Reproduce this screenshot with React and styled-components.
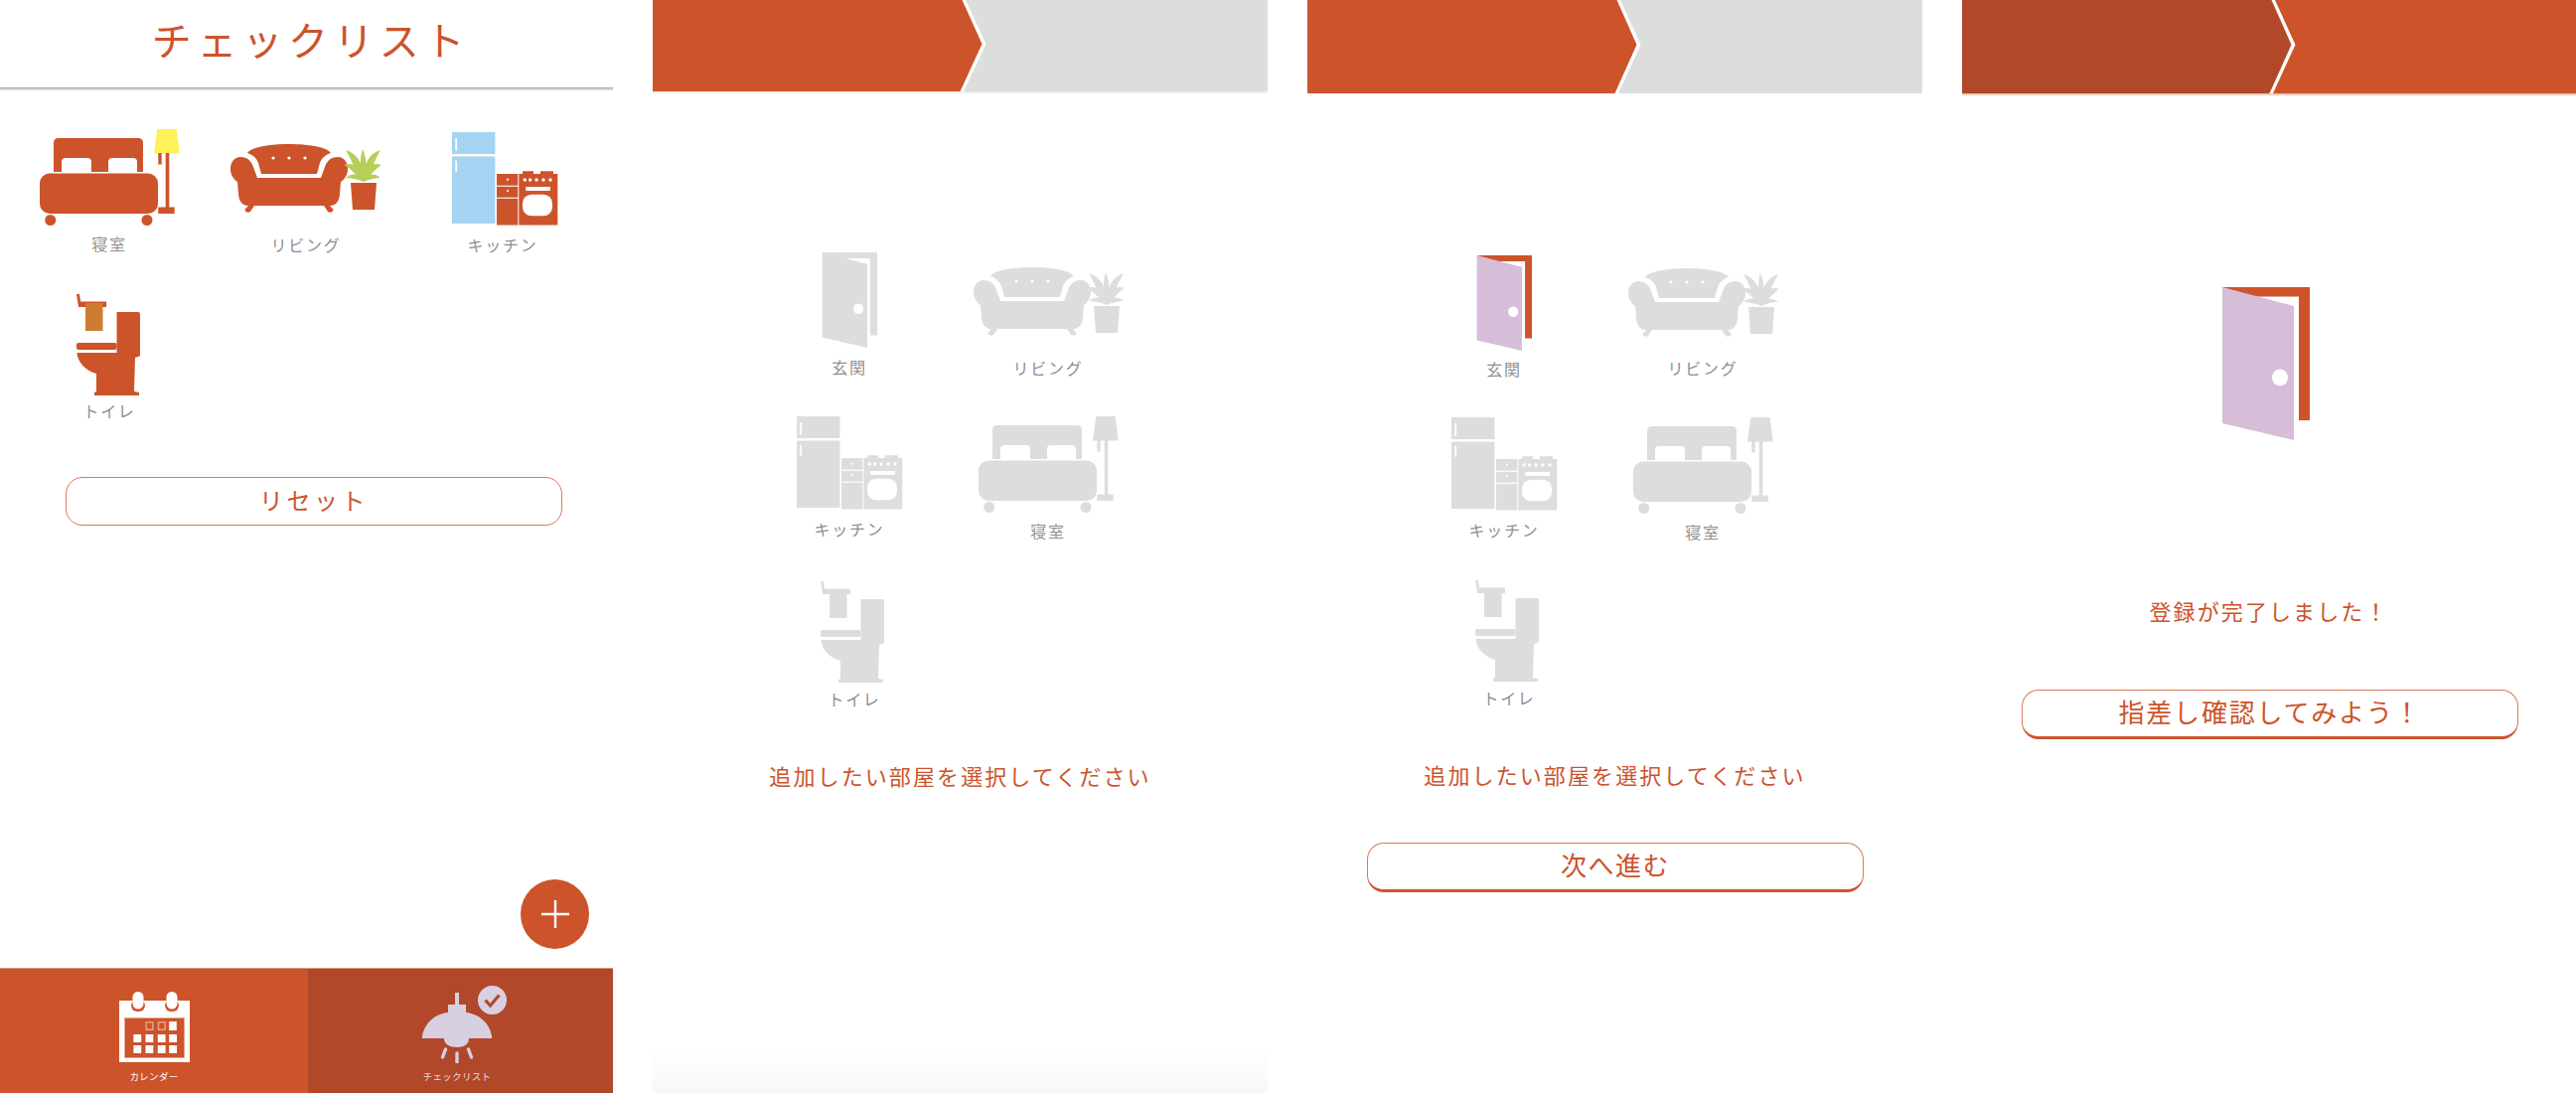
import React from 'react';
import styled, { createGlobalStyle } from 'styled-components';

const ORANGE = '#cd532b';
const DARK = '#b2482a';
const GREY = '#dcdedd';

const COLOURS = { main: ORANGE, lamp: '#fff157', leaf: '#b5cf58', fridge: '#a5d4f3', towel: '#cf7c30' };
const MUTED = { main: GREY, lamp: GREY, leaf: GREY, fridge: GREY, towel: GREY };

const GlobalStyle = createGlobalStyle`
  html, body {
    margin: 0;
    padding: 0;
    background: #fff;
  }
  body {
    font-family: "Noto Sans CJK JP", "Noto Sans", sans-serif;
    font-weight: 400;
  }
`;

const Page = styled.div`
  display: flex;
  gap: 40px;
  width: 2593px;
  height: 1100px;
  overflow: hidden;
`;

const Panel = styled.section`
  position: relative;
  display: flex;
  flex-direction: column;
  flex: none;
  width: ${props => props.$width}px;
  height: 1100px;
  background: ${props =>
    props.$fade ? 'linear-gradient(to bottom, #fff 0, #fff 1055px, #f7f7f7 1100px)' : '#fff'};
`;

const Header = styled.header`
  flex: none;
  height: 88px;
  display: flex;
  align-items: flex-start;
  justify-content: center;
  border-bottom: 1px solid #a9a9a9;
  box-shadow: 0 2px 0 #dadada;
`;

const Title = styled.h1`
  margin: 14px 0 0 9px;
  font-size: 40px;
  line-height: 50px;
  font-weight: 400;
  letter-spacing: 5.8px;
  color: ${ORANGE};
`;

const StepBar = styled.div`
  flex: none;
  height: ${props => props.$height}px;
  background: ${props => props.$rest};
  border-bottom: ${props => (props.$line ? `2px solid ${props.$line}` : 'none')};
`;

const StepEdge = styled.div`
  width: 340px;
  height: 100%;
  background: #fff;
  clip-path: polygon(0 0, 315px 0, 335.5px 48%, 313px 100%, 0 100%);
`;

const StepFill = styled.div`
  width: 100%;
  height: 100%;
  background: ${props => props.$fill};
  clip-path: polygon(0 0, 311.5px 0, 331.5px 48%, 309.5px 100%, 0 100%);
`;

const RoomGrid = styled.div`
  display: grid;
  grid-template-columns: repeat(${props => props.$cols}, ${props => props.$colWidth}px);
  grid-auto-rows: ${props => props.$rowHeight}px;
  padding-left: ${props => props.$left}px;
  margin-top: ${props => props.$top}px;
`;

const Room = styled.div`
  display: flex;
  flex-direction: column;
  align-items: center;
`;

const IconSlot = styled.div`
  margin-top: ${props => props.$top || 0}px;
  margin-bottom: ${props => props.$gap}px;
  margin-left: ${props => props.$nudge || 0}px;
  & svg {
    display: block;
  }
`;

const RoomLabel = styled.span`
  margin-left: ${props => props.$nudge || 0}px;
  font-size: 16px;
  line-height: 20px;
  letter-spacing: 1.7px;
  color: #8f8f8f;
  white-space: nowrap;
`;

const Message = styled.p`
  margin: ${props => props.$top}px 0 0;
  text-align: center;
  font-size: 22px;
  line-height: 30px;
  letter-spacing: 2.1px;
  color: ${ORANGE};
`;

const OutlineButton = styled.button`
  display: block;
  box-sizing: border-box;
  width: 500px;
  height: ${props => (props.$heavy ? 50 : 49)}px;
  margin: ${props => props.$top}px 0 0 ${props => props.$left}px;
  padding: 0 0 4px;
  background: #fff;
  border: 1.5px solid #dc7a55;
  border-bottom: ${props => (props.$heavy ? 3 : 1.5)}px solid ${props => (props.$heavy ? ORANGE : '#dc7a55')};
  border-radius: 17px;
  font-family: inherit;
  font-weight: 400;
  font-size: ${props => props.$size}px;
  line-height: 1;
  letter-spacing: ${props => props.$spacing}px;
  color: ${ORANGE};
`;

const Spacer = styled.div`
  flex: 1;
`;

const AddButton = styled.button`
  position: absolute;
  right: 24px;
  bottom: 145px;
  width: 69px;
  height: 70px;
  padding: 0;
  border: 0;
  border-radius: 50%;
  background: ${ORANGE};
  display: flex;
  align-items: center;
  justify-content: center;
`;

const TabBar = styled.nav`
  flex: none;
  display: flex;
  height: 126px;
  box-sizing: border-box;
  border-top: 1px solid #dd9a82;
`;

const Tab = styled.div`
  flex: none;
  box-sizing: border-box;
  width: ${props => props.$width}px;
  padding-top: ${props => props.$top}px;
  padding-right: ${props => props.$shift || 0}px;
  background: ${props => props.$bg};
  display: flex;
  flex-direction: column;
  align-items: center;
  & svg {
    display: block;
  }
`;

const TabLabel = styled.span`
  margin-top: ${props => props.$gap}px;
  font-size: 9.5px;
  line-height: 12px;
  letter-spacing: 0.3px;
  color: ${props => props.$color};
  white-space: nowrap;
`;

const DoorIcon = ({ leaf, frame, width = 56, height = 96 }) => (
  <svg width={width} height={height} viewBox="0 0 89 154" preserveAspectRatio="none">
    <path d="M0 0H89V134H78V9.6H30Z" fill={frame} />
    <path d="M1 0L73 19V154L1 137Z" fill={leaf} />
    <ellipse cx="59" cy="91" rx="8" ry="8.5" fill="#fff" />
  </svg>
);

const BedIcon = ({ tone }) => (
  <svg width="141" height="97" viewBox="0 0 141 97">
    <path d="M19 9H99Q104 9 104 14V43H98V33Q98 29 94 29H73Q69 29 69 33V43H52V33Q52 29 48 29H26Q22 29 22 33V43H14V14Q14 9 19 9Z" fill={tone.main} />
    <rect x="0" y="44.5" width="119" height="40.5" rx="10" fill={tone.main} />
    <circle cx="10.7" cy="91.5" r="5.5" fill={tone.main} />
    <circle cx="108" cy="91.5" r="5.5" fill={tone.main} />
    <path d="M118.3 0H137.7L140.7 24.5H115Z" fill={tone.lamp} />
    <rect x="119.3" y="24" width="3.4" height="11.5" fill={tone.main} />
    <rect x="126.7" y="24" width="3.6" height="56" fill={tone.main} />
    <rect x="119.3" y="78.5" width="16.4" height="6.5" fill={tone.main} />
  </svg>
);

const SofaIcon = ({ tone }) => (
  <svg width="151" height="69" viewBox="0 0 151 69">
    <path d="M17 9C24 -3 94 -3 101 9C95 11 92 14 90 19L87 30H31L28 19C26 14 23 11 17 9Z" fill={tone.main} />
    <circle cx="43" cy="14" r="1.6" fill="#fff" />
    <circle cx="59" cy="14" r="1.6" fill="#fff" />
    <circle cx="75" cy="14" r="1.6" fill="#fff" />
    <path d="M10 13C17 13 21 17 23 23L27 34H91L95 23C97 17 101 13 108 13C115 13 118.5 20 118 26C117.5 32 114 36 111 38L110 50C109.5 58 106 62 100 62L103 65C105 68 100 70 98 68L94 62H24L20 68C18 70 13 68 15 65L18 62C12 62 8.5 58 8 50L7 38C4 36 .5 32 0 26C-.5 20 3 13 10 13Z" fill={tone.main} />
    <path d="M121 39H147L145 66H123Z" fill={tone.main} />
    <g fill={tone.leaf}>
      <path d="M134 38C127 30 122 16 116 6C127 9 135 20 134 38Z" />
      <path d="M134 38C126 30 120 24 114 21C124 17 132 24 134 38Z" />
      <path d="M134 38C127 35 121 34 116 34C123 28 131 30 134 38Z" />
      <path d="M134 38C130 26 130 14 133 5C137 14 138 26 134 38Z" />
      <path d="M134 38C141 30 145 16 151 6C140 9 133 20 134 38Z" />
      <path d="M134 38C142 30 147 24 152 21C143 17 135 24 134 38Z" />
      <path d="M134 38C141 35 146 34 151 34C144 28 137 30 134 38Z" />
    </g>
  </svg>
);

const KitchenIcon = ({ tone }) => (
  <svg width="108" height="94" viewBox="0 0 108 94">
    <rect x="1" y="0" width="43.4" height="22" fill={tone.fridge} />
    <rect x="1" y="24.5" width="43.4" height="67.5" fill={tone.fridge} />
    <rect x="4.3" y="6" width="1.8" height="12.5" fill="#fff" />
    <rect x="4.3" y="28.7" width="1.8" height="11" fill="#fff" />
    <rect x="46" y="42" width="21.3" height="11.7" fill={tone.main} />
    <rect x="46" y="54.8" width="21.3" height="10.9" fill={tone.main} />
    <rect x="46" y="66.8" width="21.3" height="26.7" fill={tone.main} />
    <circle cx="57" cy="47.7" r="1.1" fill="#fff" />
    <circle cx="57" cy="59" r="1.1" fill="#fff" />
    <path d="M72 39.3H83V42H90V39.3H103V42H107.3V93.5H68.3V42H72Z" fill={tone.main} />
    <g fill="#fff">
      <circle cx="74.3" cy="48" r="1.7" />
      <circle cx="79.7" cy="48" r="1.7" />
      <circle cx="86" cy="48" r="1.7" />
      <circle cx="93" cy="48" r="1.7" />
      <circle cx="100" cy="48" r="1.7" />
    </g>
    <rect x="75.3" y="55" width="24.7" height="4" fill="#fff" />
    <rect x="72" y="62.7" width="30" height="21.6" rx="9" fill="#fff" />
  </svg>
);

const ToiletIcon = ({ tone }) => (
  <svg width="64" height="104" viewBox="0 0 64 104">
    <path d="M0 0H3L4 7.6H30V13H2Z" fill={tone.main} />
    <rect x="9" y="9" width="17.5" height="28" fill={tone.towel} />
    <path d="M42 18H62Q64 18 64 20V62L62 63L59 64L58 98L63 99V102H18V99L20 98V80C12 78 1 70 .5 59H40.5V18Z" fill={tone.main} />
    <rect x="0" y="49" width="40.5" height="7" rx="2" fill={tone.main} />
  </svg>
);

const CalendarIcon = () => (
  <svg width="71" height="71" viewBox="0 0 71 71">
    <rect x="0" y="9" width="71" height="62" fill="#fff" />
    <rect x="5.5" y="26.5" width="60" height="40" fill={ORANGE} stroke="#e6a88e" strokeWidth="1" />
    {[13.5, 47.5].map(x => (
      <g key={x}>
        <rect x={x - 1.5} y="8" width="14" height="12" rx="6" fill={ORANGE} />
        <rect x={x} y="0" width="11" height="17.5" rx="5.5" fill="#fff" />
      </g>
    ))}
    {[26.5, 38.8].map(x => (
      <rect key={x} x={x + 0.7} y="30.7" width="6.6" height="7.6" fill="none" stroke="#e6a88e" strokeWidth="1.4" />
    ))}
    <rect x="50.2" y="30" width="7.6" height="9" fill="#fff" />
    {[43, 54].map(y =>
      [14.4, 26.5, 38.8, 50.2].map(x => <rect key={`${x}-${y}`} x={x} y={y} width="7.8" height="8" fill="#fff" />)
    )}
  </svg>
);

const LampIcon = () => (
  <svg width="100" height="78" viewBox="-15 -7 100 78">
    <g fill="#d8d0e2">
      <rect x="33" y="0" width="4" height="13" />
      <rect x="26" y="12" width="18" height="10" />
      <path d="M0 44C2 30 14 21 26 20H44C56 21 68 30 70 44V46H0Z" />
      <path d="M22 46H47C47 52 42 55 35 55C28 55 22 52 22 46Z" />
      <circle cx="70.5" cy="7.5" r="14.5" />
    </g>
    <g stroke="#d8d0e2" strokeWidth="3.4" strokeLinecap="round">
      <path d="M35 61V70" />
      <path d="M23.5 57L20.5 65" />
      <path d="M46.5 57L49.5 65" />
    </g>
    <path d="M63.5 7.5L68.5 13L77.5 2.5" fill="none" stroke={DARK} strokeWidth="3.2" />
  </svg>
);

const PlusIcon = () => (
  <svg width="28" height="28" viewBox="0 0 28 28">
    <path d="M14 0V28M0 14H28" stroke="#fff" strokeWidth="2.4" fill="none" />
  </svg>
);

const RoomCell = ({ label, top, gap, nudge, labelNudge, children }) => (
  <Room>
    <IconSlot $top={top} $gap={gap} $nudge={nudge}>
      {children}
    </IconSlot>
    <RoomLabel $nudge={labelNudge}>{label}</RoomLabel>
  </Room>
);

const StepHeader = ({ fill, rest, height, line }) => (
  <StepBar $rest={rest} $height={height} $line={line}>
    <StepEdge>
      <StepFill $fill={fill} />
    </StepEdge>
  </StepBar>
);

const CheckList = () => (
  <Panel $width={617}>
    <Header>
      <Title>チェックリスト</Title>
    </Header>
    <RoomGrid $cols={3} $colWidth={198} $rowHeight={166} $left={11} $top={41}>
      <RoomCell label="寝室" gap={8}><BedIcon tone={COLOURS} /></RoomCell>
      <RoomCell label="リビング" top={15} gap={22} nudge={-2}><SofaIcon tone={COLOURS} /></RoomCell>
      <RoomCell label="キッチン" top={3} gap={9} nudge={4}><KitchenIcon tone={COLOURS} /></RoomCell>
      <RoomCell label="トイレ" gap={3} nudge={-2}><ToiletIcon tone={COLOURS} /></RoomCell>
    </RoomGrid>
    <OutlineButton $top={18} $left={66} $size={24} $spacing={3.5}>リセット</OutlineButton>
    <Spacer />
    <AddButton aria-label="追加"><PlusIcon /></AddButton>
    <TabBar>
      <Tab $width={310} $bg={ORANGE} $top={23}>
        <CalendarIcon />
        <TabLabel $gap={8} $color="#fff">カレンダー</TabLabel>
      </Tab>
      <Tab $width={307} $bg={DARK} $top={17} $shift={7}>
        <LampIcon />
        <TabLabel $gap={7} $color="#ecdcd8">チェックリスト</TabLabel>
      </Tab>
    </TabBar>
  </Panel>
);

const RoomSelect = ({ selected, width, fade, barHeight, barLine, top, rowHeight, gaps, messageTop }) => (
  <Panel $width={width} $fade={fade}>
    <StepHeader fill={ORANGE} rest={GREY} height={barHeight} line={barLine} />
    <RoomGrid $cols={2} $colWidth={200} $rowHeight={rowHeight} $left={98} $top={top}>
      <RoomCell label="玄関" gap={gaps.door}>
        {selected ? <DoorIcon leaf="#d6bdd8" frame={ORANGE} /> : <DoorIcon leaf={GREY} frame={GREY} />}
      </RoomCell>
      <RoomCell label="リビング" top={gaps.sofaTop} gap={gaps.sofa}><SofaIcon tone={MUTED} /></RoomCell>
      <RoomCell label="キッチン" gap={gaps.kitchen}><KitchenIcon tone={MUTED} /></RoomCell>
      <RoomCell label="寝室" gap={gaps.bed}><BedIcon tone={MUTED} /></RoomCell>
      <RoomCell label="トイレ" top={1} gap={gaps.toilet} nudge={5} labelNudge={10}><ToiletIcon tone={MUTED} /></RoomCell>
    </RoomGrid>
    <Message $top={messageTop}>追加したい部屋を選択してください</Message>
    {selected && <OutlineButton $heavy $top={54} $left={60} $size={26} $spacing={1.5}>次へ進む</OutlineButton>}
  </Panel>
);

const DoneBlock = styled.div`
  display: flex;
  justify-content: center;
  padding-right: 7px;
  margin-top: 193px;
  & svg {
    display: block;
  }
`;

const Finished = () => (
  <Panel $width={618}>
    <StepHeader fill={DARK} rest={ORANGE} height={94} line="#efcdbf" />
    <DoneBlock>
      <DoorIcon leaf="#d6bdd8" frame={ORANGE} width={89} height={154} />
    </DoneBlock>
    <Message $top={156}>登録が完了しました！</Message>
    <OutlineButton $heavy $top={65} $left={60} $size={26} $spacing={1.8}>指差し確認してみよう！</OutlineButton>
  </Panel>
);

const App = () => (
  <Page>
    <GlobalStyle />
    <CheckList />
    <RoomSelect
      width={619}
      fade
      barHeight={92}
      barLine="#f0f0ee"
      top={160}
      rowHeight={165}
      messageTop={16}
      gaps={{ door: 9, sofaTop: 15, sofa: 22, kitchen: 9, bed: 8, toilet: 4 }}
    />
    <RoomSelect
      selected
      width={619}
      barHeight={94}
      top={163}
      rowHeight={163}
      messageTop={18}
      gaps={{ door: 8, sofaTop: 13, sofa: 21, kitchen: 9, bed: 8, toilet: 4 }}
    />
    <Finished />
  </Page>
);

export default App;
